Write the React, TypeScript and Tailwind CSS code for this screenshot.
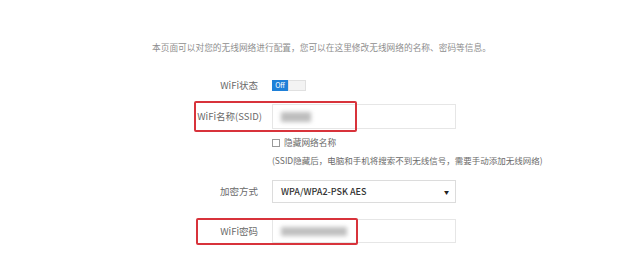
export default function App() {
  const font = { fontFamily: '"Noto Sans CJK SC", "Liberation Sans", sans-serif' };
  return (
    <div
      className="relative h-[256px] w-[633px] overflow-hidden bg-white text-[#6a6a6a]"
      style={font}
    >
      <p className="pl-[152px] pt-[42px] text-[8.7px] leading-[12px] text-[#8e8e8e]">
        本页面可以对您的无线网络进行配置，您可以在这里修改无线网络的名称、密码等信息。
      </p>

      {/* WiFi状态 */}
      <div className="mt-[24px] flex h-[14px] items-center">
        <div className="w-[258px] text-right text-[9.5px]">WiFi状态</div>
        <div className="ml-[14px] flex h-[11px]">
          <div className="flex w-[16px] items-center justify-center bg-[#1e80d8] text-[7px] text-white">
            Off
          </div>
          <div className="w-[18px] border border-[#e0e0e0] bg-[#f3f3f3]" />
        </div>
      </div>

      {/* SSID */}
      <div className="relative mt-[12px] flex h-[25px] items-center">
        <div className="absolute left-[194px] top-[-3px] h-[31px] w-[163px] rounded-[2px] border-2 border-[#d8333b]" />
        <div className="w-[262px] text-right text-[9.5px]">WiFi名称(SSID)</div>
        <div className="ml-[10px] flex h-[25px] w-[184px] items-center border border-[#e6e6e6] pl-[8px]">
          <div className="h-[10px] w-[30px] bg-[#bdbdbd] blur-[2px]" />
        </div>
      </div>

      {/* hide */}
      <div className="mt-[8px] flex h-[12px] items-center pl-[272px] text-[8.7px]">
        <span className="mr-[4px] h-[8px] w-[8px] border border-[#9a9a9a] bg-white" />
        隐藏网络名称
      </div>
      <div className="mt-[5px] h-[12px] pl-[272px] text-[8.5px] leading-[12px]">
        (SSID隐藏后，电脑和手机将搜索不到无线信号，需要手动添加无线网络)
      </div>

      {/* 加密方式 */}
      <div className="mt-[14px] flex h-[23px] items-center">
        <div className="w-[258px] text-right text-[9.5px]">加密方式</div>
        <div className="ml-[14px] flex h-[23px] w-[184px] items-center justify-between border border-[#dcdcdc] pl-[8px] pr-[6px]">
          <span className="text-[9px] font-medium text-[#333]">WPA/WPA2-PSK AES</span>
          <span className="text-[5px] text-[#222]">▼</span>
        </div>
      </div>

      {/* 密码 */}
      <div className="relative mt-[16px] flex h-[24px] items-center">
        <div className="absolute left-[196px] top-[-1px] h-[27px] w-[162px] rounded-[2px] border-2 border-[#d8333b]" />
        <div className="w-[258px] text-right text-[9.5px]">WiFi密码</div>
        <div className="ml-[14px] flex h-[24px] w-[184px] items-center border border-[#e6e6e6] pl-[8px]">
          <div className="h-[9px] w-[66px] bg-[#c0c0c0] blur-[2px]" />
        </div>
      </div>
    </div>
  );
}
